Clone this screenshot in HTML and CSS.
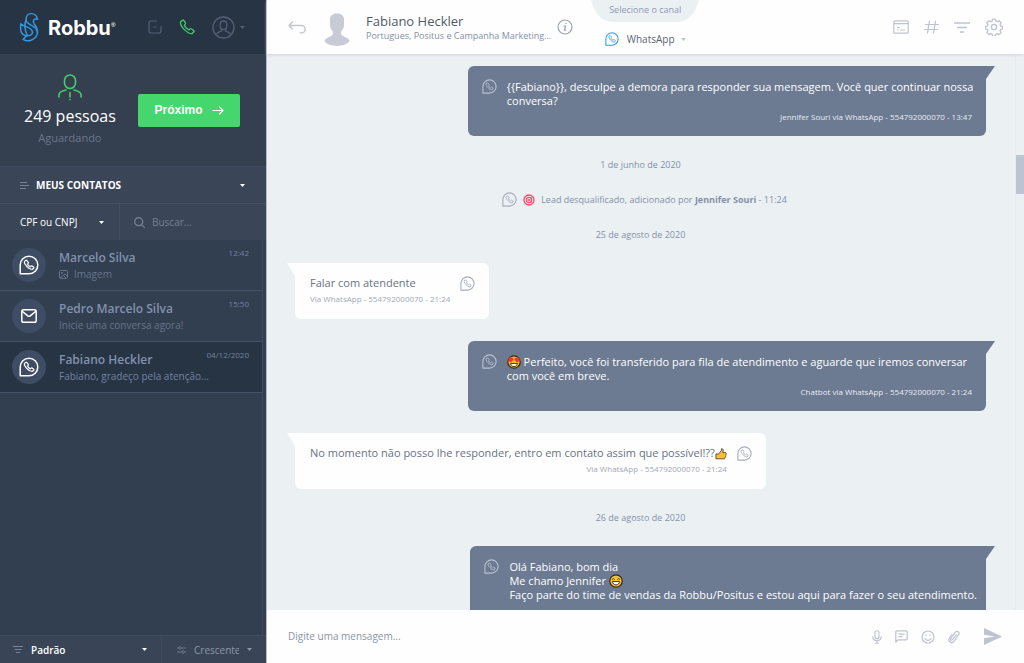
FILE: index.html
```html
<!DOCTYPE html>
<html lang="pt-BR">
<head>
<meta charset="utf-8">
<meta name="viewport" content="width=device-width, initial-scale=1">
<title>Robbu</title>
<link rel="stylesheet" href="styles.css">
</head>
<body>
<svg class="sprite" aria-hidden="true">
  <symbol id="whats" viewBox="0 0 20 20">
    <path d="M1.2 18.8V10A8.8 8.8 0 1 1 10 18.8Z" fill="none" stroke="currentColor" stroke-width="1.5" stroke-linejoin="round"/>
    <path d="M6.7 5.3 5.4 6.6c-.4 2.500 4.600 7.900 7.700 7.900l1.600-1.300c.3-.3.3-.7 0-1l-1.500-1.100c-.3-.3-.7-.2-1 0l-.8.7c-1.200-.5-2.200-1.600-2.800-2.700l.7-.9c.2-.3.2-.6 0-.9L7.700 5.300c-.3-.3-.7-.3-1 0Z" fill="none" stroke="currentColor" stroke-width="1.200" stroke-linejoin="round"/>
  </symbol>
  <symbol id="caret" viewBox="0 0 5 3"><path d="M0 0h5L2.500 3Z" fill="currentColor"/></symbol>
</svg>
<div class="app">
  <aside class="sidebar">
    <header class="brand-bar">
      <a class="brand" href="#" aria-label="Robbu">
        <svg class="brand-mark" viewBox="58 36 60 92" fill="none" stroke="#3199e6" stroke-width="4.500" stroke-linecap="round" stroke-linejoin="round">
          <path d="M114 58C110 36 79 34 79 60c0 18 35 16 35 38 0 14-12 22-24 26-6 1-14 0-20-4l10-11"/>
          <path d="M114 58c-10-2-16 3-11 13 8 9 11 17 11 27"/>
          <path d="M63 72c-3 24 2 36 20 37 14 0 18-8 14-17-6-11-24-9-34-20Z"/>
          <path d="M79 60c-6 12-6 26 4 49"/>
        </svg>
        <span class="brand-name">Robbu</span><span class="brand-reg">®</span>
      </a>
      <nav class="brand-tools" aria-label="Conta">
        <button type="button" class="icon-button" aria-label="Pausa">
          <svg width="14" height="14" viewBox="0 0 14 14" fill="none" stroke="#565e76" stroke-width="1.200" stroke-linecap="round"><path d="M8.500 1H3a2 2 0 0 0-2 2v8a2 2 0 0 0 2 2h8a2 2 0 0 0 2-2V6.500M6 7h2"/></svg>
        </button>
        <button type="button" class="icon-button" aria-label="Telefone">
          <svg width="16" height="16" viewBox="0 0 16 16" fill="none" stroke="#45cd6b" stroke-width="1.300" stroke-linejoin="round"><path d="M3.500 1.200 1.500 3C.8 7.500 8.800 15 13 14.700l1.800-1.900c.4-.5.3-1-.1-1.300l-2.500-1.700c-.5-.3-.9-.2-1.200.1l-1.100 1.100C8 10 6 8 5.300 6.300l1-1.200c.3-.4.3-.8.1-1.200L4.700 1.400c-.3-.4-.8-.5-1.200-.2Z"/></svg>
        </button>
        <button type="button" class="icon-button account" aria-label="Perfil">
          <svg width="23" height="23" viewBox="0 0 23 23" fill="none" stroke="#565e76" stroke-width="1.300"><circle cx="11.500" cy="11.500" r="10.500"/><rect x="8.200" y="5" width="6.600" height="8.500" rx="3.300"/><path d="M4.500 18.500c.8-2.500 2.800-2.700 5-3.500v-2m4 0v2c2.200.8 4.200 1 5 3.500"/></svg>
          <svg class="caret dim" aria-hidden="true"><use href="#caret"/></svg>
        </button>
      </nav>
    </header>

    <section class="queue">
      <div class="queue-count">
        <svg width="24" height="27" viewBox="0 0 24 27" fill="none" stroke="#45cd6b" stroke-width="1.600" stroke-linecap="round"><rect x="6.500" y="1" width="11" height="13.500" rx="5.500"/><path d="M1 23v-2c0-3 2-4 7-5M23 23v-2c0-3-2-4-7-5M12 18.500v4.500M12 25.500v.2"/></svg>
        <strong class="queue-number">249 pessoas</strong>
        <span class="queue-label">Aguardando</span>
      </div>
      <button type="button" class="next-button">Próximo
        <svg width="12" height="9" viewBox="0 0 12 9" fill="none" stroke="#fff" stroke-width="1.200" stroke-linecap="round" stroke-linejoin="round"><path d="M1 4.500h10M7.500 1 11 4.500 7.500 8"/></svg>
      </button>
    </section>

    <button type="button" class="list-title">
      <svg width="9" height="7" viewBox="0 0 9 7" stroke="#77839a" stroke-width="1"><path d="M0 .5h7M0 3.500h9M0 6.500h6"/></svg>
      <span>MEUS CONTATOS</span>
      <svg class="caret" aria-hidden="true"><use href="#caret"/></svg>
    </button>

    <div class="filters">
      <label class="select-box">
        <select aria-label="Campo de busca"><option>CPF ou CNPJ</option></select>
        <svg class="caret" aria-hidden="true"><use href="#caret"/></svg>
      </label>
      <label class="search">
        <svg width="11" height="11" viewBox="0 0 11 11" fill="none" stroke="#77839a" stroke-width="1.200" stroke-linecap="round"><circle cx="4.700" cy="4.700" r="4"/><path d="m7.600 7.600 2.800 2.800"/></svg>
        <input type="search" placeholder="Buscar..." aria-label="Buscar">
      </label>
    </div>

    <ul class="contacts">
      <li><a class="contact" href="#">
        <span class="avatar"><svg width="20" height="20"><use href="#whats"/></svg></span>
        <span class="contact-text"><span class="contact-name">Marcelo Silva</span>
          <span class="contact-preview"><svg width="9" height="9" viewBox="0 0 9 9" fill="none" stroke="currentColor"><rect x=".5" y=".5" width="8" height="8" rx="1"/><circle cx="3" cy="3" r=".7"/><path d="m1 8 5-4 2 2M5 6l2 2"/></svg>Imagem</span></span>
        <time class="contact-time">12:42</time>
      </a></li>
      <li><a class="contact" href="#">
        <span class="avatar"><svg width="16" height="14" viewBox="0 0 16 14" fill="none" stroke="currentColor" stroke-width="1.500" stroke-linejoin="round" stroke-linecap="round"><rect x=".8" y=".8" width="14.400" height="12.400" rx="1.800"/><path d="m1.500 2.500 5.300 4.300c.8.600 1.600.6 2.400 0l5.300-4.300"/></svg></span>
        <span class="contact-text"><span class="contact-name">Pedro Marcelo Silva</span>
          <span class="contact-preview">Inicie uma conversa agora!</span></span>
        <time class="contact-time">15:50</time>
      </a></li>
      <li><a class="contact active" href="#" aria-current="true">
        <span class="avatar"><svg width="20" height="20"><use href="#whats"/></svg></span>
        <span class="contact-text"><span class="contact-name">Fabiano Heckler</span>
          <span class="contact-preview">Fabiano, gradeço pela atenção...</span></span>
        <time class="contact-time">04/12/2020</time>
      </a></li>
    </ul>

    <footer class="sort-bar">
      <label class="select-box sort-view">
        <svg width="10" height="7" viewBox="0 0 10 7" stroke="#77839a"><path d="M0 .5h10M1.500 3.500h7M3 6.500h4"/></svg>
        <select aria-label="Visualização"><option>Padrão</option></select>
        <svg class="caret" aria-hidden="true"><use href="#caret"/></svg>
      </label>
      <label class="select-box sort-order">
        <svg width="9" height="8" viewBox="0 0 9 8" fill="none" stroke="#66788b"><path d="M0 2h1.500M4.500 2H9M0 6h4.500M7.500 6H9"/><circle cx="3" cy="2" r="1.300"/><circle cx="6" cy="6" r="1.300"/></svg>
        <select aria-label="Ordem"><option>Crescente</option></select>
        <svg class="caret" aria-hidden="true"><use href="#caret"/></svg>
      </label>
    </footer>
  </aside>

  <main class="chat">
    <header class="chat-header">
      <button type="button" class="icon-button" aria-label="Voltar">
        <svg width="18" height="13" viewBox="0 0 18 13" fill="none" stroke="#c3c7d2" stroke-width="1.400" stroke-linecap="round" stroke-linejoin="round"><path d="M4.500 1 1 4.500 4.500 8M1 4.500h12.500a3.700 3.700 0 0 1 0 7.400H12"/></svg>
      </button>
      <svg class="person" viewBox="0 0 26 33" aria-hidden="true"><path d="M6 6c0-7.500 14-7.500 14 0 0 2 .5 8-1 10-1.200 1.600-2 2.500-2 4.500 0 3 7.500 3.500 8.700 7.500C21 34.500 5 34.500.3 28 1.500 24 9 23.500 9 20.500c0-2-.8-2.900-2-4.500C5.500 14 6 8 6 6Z" fill="#c6cbd5"/></svg>
      <div class="customer">
        <h1 class="customer-name">Fabiano Heckler</h1>
        <p class="customer-tags">Portugues, Positus e Campanha Marketing...</p>
      </div>
      <button type="button" class="icon-button info" aria-label="Informações">
        <svg width="16" height="16" viewBox="0 0 16 16" fill="none" stroke="#9ba2b1" stroke-width="1.200" stroke-linecap="round"><circle cx="8" cy="8" r="7"/><path d="M8.900 4.200v.3M7 7h1.500l-1 4.200h1.300"/></svg>
      </button>
      <div class="channel">
        <svg class="channel-tab-shape" viewBox="0 0 108 22" preserveAspectRatio="none" aria-hidden="true"><path d="M0 0h108c-4 14-10 22-24 22H24C10 22 4 14 0 0Z" fill="#ebf0f3"/></svg>
        <span class="channel-tab">Selecione o canal</span>
        <label class="channel-choice">
          <svg width="14" height="14" class="blue"><use href="#whats"/></svg>
          <select aria-label="Canal"><option>WhatsApp</option></select>
          <svg class="caret" aria-hidden="true"><use href="#caret"/></svg>
        </label>
      </div>
      <nav class="chat-tools" aria-label="Ferramentas">
        <button type="button" class="icon-button" aria-label="Roteiro"><svg width="16" height="14" viewBox="0 0 16 14" fill="none" stroke="#bfc3d0" stroke-width="1.200"><rect x=".8" y=".8" width="14.400" height="12.400" rx="1"/><path d="M1 3.700h14M4 7.500h3M4 10h1.500M7 10h5"/></svg></button>
        <button type="button" class="icon-button" aria-label="Etiquetas"><svg width="15" height="14" viewBox="0 0 15 14" fill="none" stroke="#bfc3d0" stroke-width="1.200" stroke-linecap="round"><path d="M5.500 1 3.500 13M11.500 1l-2 12M1.500 4.500h13M.7 9.500h13"/></svg></button>
        <button type="button" class="icon-button" aria-label="Filtrar"><svg width="16" height="11" viewBox="0 0 16 11" fill="none" stroke="#bfc3d0" stroke-width="1.500"><path d="M0 1h16M3 5.500h10M6 10h4"/></svg></button>
        <button type="button" class="icon-button" aria-label="Configurações"><svg width="18" height="18" viewBox="0 0 18 18" fill="none" stroke="#bfc3d0" stroke-width="1.300" stroke-linejoin="round"><circle cx="9" cy="9" r="2.600"/><path d="M7.600 1.200h2.800l.6 2 1.300.5 1.800-1 2 2-1 1.900.5 1.200 2 .6v2.500l-2 .6-.5 1.300 1 1.800-2 2-1.800-1-1.300.5-.6 2H7.600l-.6-2-1.300-.5-1.800 1-2-2 1-1.800-.5-1.300-1.900-.6V8.400l1.900-.6.5-1.200-1-1.900 2-2 1.800 1L7 3.200Z"/></svg></button>
      </nav>
    </header>

    <section class="messages" aria-label="Mensagens">
      <div class="thread">
        <article class="bubble sent">
          <svg class="via"><use href="#whats"/></svg>
          <div class="bubble-body"><p>{{Fabiano}}, desculpe a demora para responder sua mensagem. Você quer continuar nossa conversa?</p><footer>Jennifer Souri via WhatsApp - 554792000070 - 13:47</footer></div>
        </article>
        <div class="day">1 de junho de 2020</div>
        <div class="event">
          <svg class="via"><use href="#whats"/></svg>
          <svg width="12" height="12" viewBox="0 0 12 12" fill="none" stroke="#fb4460" stroke-width="1.300"><circle cx="6" cy="6" r="5"/><circle cx="6" cy="6" r="2.600"/><circle cx="6" cy="6" r=".4"/></svg>
          <span>Lead desqualificado, adicionado por <b>Jennifer Souri</b> - 11:24</span>
        </div>
        <div class="day">25 de agosto de 2020</div>
        <article class="bubble received">
          <div class="bubble-body"><p>Falar com atendente</p><footer>Via WhatsApp - 554792000070 - 21:24</footer></div>
          <svg class="via"><use href="#whats"/></svg>
        </article>
        <article class="bubble sent">
          <svg class="via"><use href="#whats"/></svg>
          <div class="bubble-body"><p><svg class="emoji" viewBox="0 0 14 14" role="img" aria-label="Apaixonado"><circle cx="7" cy="7" r="6.200" fill="#fdb92d" stroke="#33251f" stroke-width="1.200"/><path d="M1.500 3.500C3 1.500 4.500 2.500 4.500 3c1.500-.8 2.500.5 1.800 2L4 7.500 1.500 6ZM12.500 3.500C11 1.500 9.500 2.500 9.500 3 8 2.200 7 3.500 7.700 5L10 7.500 12.500 6Z" fill="#ef3b24"/><path d="M3.500 8.500h7c-.5 4-6.500 4-7 0Z" fill="#fff" stroke="#33251f" stroke-width=".9"/></svg> Perfeito, você foi transferido para fila de atendimento e aguarde que iremos conversar com você em breve.</p><footer>Chatbot via WhatsApp - 554792000070 - 21:24</footer></div>
        </article>
        <article class="bubble received">
          <div class="bubble-body"><p>No momento não posso lhe responder, entro em contato assim que possível!??<svg class="emoji thumb-up" viewBox="0 0 13 13" role="img" aria-label="Joinha"><path d="M1 6.500h3L6.700 3l.5-2.200c1.800-.2 2.200 1.500 1.200 4.200h3c1 .3 1 1.500.4 1.800.5.700.3 1.400-.3 1.700.3.700 0 1.300-.5 1.600.2.800-.3 1.600-1.200 1.600H1Z" fill="#fdbd35" stroke="#4a3b2a" stroke-width=".9" stroke-linejoin="round"/></svg></p><footer>Via WhatsApp - 554792000070 - 21:24</footer></div>
          <svg class="via"><use href="#whats"/></svg>
        </article>
        <div class="day">26 de agosto de 2020</div>
        <article class="bubble sent">
          <svg class="via"><use href="#whats"/></svg>
          <div class="bubble-body"><p>Olá Fabiano, bom dia<br>Me chamo Jennifer <svg class="emoji" viewBox="0 0 14 14" role="img" aria-label="Sorriso"><circle cx="7" cy="7" r="6.200" fill="#fdc037" stroke="#33251f" stroke-width="1.200"/><path d="M3 5.500q1.300-1.600 2.600 0M8.400 5.500q1.300-1.600 2.600 0" fill="none" stroke="#33251f" stroke-width=".9"/><path d="M3.500 7.500h7c-.3 4.500-6.700 4.500-7 0Z" fill="#fff" stroke="#33251f" stroke-width=".9"/></svg><br>Faço parte do time de vendas da Robbu/Positus e estou aqui para fazer o seu atendimento.</p></div>
        </article>
      </div>
      <div class="scroll-track"><span class="scroll-thumb"></span></div>
    </section>

    <form class="composer">
      <input type="text" placeholder="Digite uma mensagem..." aria-label="Digite uma mensagem">
      <div class="composer-tools">
        <button type="button" class="icon-button" aria-label="Gravar áudio"><svg width="10" height="14" viewBox="0 0 10 14" fill="none" stroke="#bfc3d0" stroke-width="1.100" stroke-linecap="round"><rect x="3" y=".7" width="4" height="8" rx="2"/><path d="M.8 6.500C.8 12 9.200 12 9.200 6.500M5 10.700v2.600M3.500 13.300h3"/></svg></button>
        <button type="button" class="icon-button" aria-label="Frases rápidas"><svg width="13" height="13" viewBox="0 0 13 13" fill="none" stroke="#bfc3d0" stroke-width="1.200" stroke-linejoin="round"><path d="M.8 12V1.800q0-1 1-1h9.400q1 0 1 1v7q0 1-1 1H3.200ZM3.500 4.200h6M3.500 6.600h4"/></svg></button>
        <button type="button" class="icon-button" aria-label="Emoji"><svg width="14" height="14" viewBox="0 0 14 14" fill="none" stroke="#bfc3d0" stroke-width="1.200" stroke-linecap="round"><circle cx="7" cy="7" r="6"/><path d="M4 8.500c1.300 2.500 4.700 2.500 6 0M5 4.800v.5M9 4.800v.5"/></svg></button>
        <button type="button" class="icon-button" aria-label="Anexar"><svg width="12" height="14" viewBox="0 0 12 14" fill="none" stroke="#bfc3d0" stroke-width="1.200" stroke-linecap="round"><path d="m8.500 4.500-4 5.200c-.9 1.200-2.500 0-1.700-1.200L7.300 2.200c1.500-2 4.800.2 3.400 2.500L6 11.300c-2 2.900-6.500.3-4.700-3.100L4 4.500"/></svg></button>
        <button type="submit" class="icon-button send" aria-label="Enviar"><svg width="18" height="17" viewBox="0 0 18 17" fill="#bfc3d0"><path d="M0 0 18 8.500 0 17V10.300l11-1.800L0 6.700Z"/></svg></button>
      </div>
    </form>
  </main>
</div>
</body>
</html>
```
FILE: styles.css
```css
* { box-sizing: border-box; }

body {
  margin: 0;
  font-family: "Open Sans", "Noto Sans", sans-serif;
  font-size: 11px;
  color: #5b6578;
}

p, h1, ul { margin: 0; padding: 0; }
ul { list-style: none; }
svg { flex: none; display: block; }
a { color: inherit; text-decoration: none; }
.sprite { position: absolute; width: 0; height: 0; }

button, input, select {
  font: inherit;
  color: inherit;
  border: 0;
  margin: 0;
  padding: 0;
  background: none;
  outline: 0;
}
select { appearance: none; flex: 1; min-width: 0; }
button { cursor: pointer; }
.icon-button { display: flex; align-items: center; }
.caret { width: 5px; height: 3px; color: #fff; }
.caret.dim { color: #565e76; }

.app {
  display: grid;
  grid-template-columns: 266px minmax(0, 1fr);
  height: 100vh;
  overflow: hidden;
}

/* Sidebar */
.sidebar {
  display: flex;
  flex-direction: column;
  min-height: 0;
  background: #323f50;
}

.brand-bar {
  display: flex;
  align-items: center;
  justify-content: space-between;
  height: 54px;
  padding: 0 21px 0 19px;
  background: #263444;
}
.brand { display: flex; align-items: center; color: #fff; }
.brand-mark { width: 20px; height: 30px; margin-right: 9px; }
.brand-name { font: 700 20px/30px Inter, sans-serif; padding-top: 2px; }
.brand-reg { align-self: flex-start; font-size: 6px; line-height: 28px; }
.brand-tools { display: flex; align-items: center; gap: 17px; }
.account { gap: 5px; }

.queue {
  display: flex;
  align-items: center;
  justify-content: space-between;
  height: 112px;
  padding: 0 26px 0 24px;
  background: #343f50;
}
.queue-count { display: flex; flex-direction: column; align-items: center; }
.queue-number { font-size: 16px; font-weight: 400; line-height: 24px; color: #fff; margin-top: 3px; }
.queue-label { line-height: 16px; color: #6c788b; margin-top: 2px; }
.next-button {
  display: flex;
  align-items: center;
  justify-content: center;
  gap: 9px;
  width: 102px;
  height: 33px;
  border-radius: 2px;
  background: #45d66e;
  color: #fff;
  font: 700 12px/16px "Liberation Sans", Arial, sans-serif;
}

.list-title {
  display: flex;
  align-items: center;
  gap: 7px;
  height: 37px;
  padding: 0 21px 0 20px;
  border-top: 1px solid #3b4a5e;
  background: #3a4657;
  color: #fff;
  font-size: 10px;
  font-weight: 700;
}
.list-title span { flex: 1; text-align: left; }

.filters {
  display: grid;
  grid-template-columns: 120px minmax(0, 1fr);
  height: 37px;
  border-top: 1px solid #3f5063;
  background: #3a4657;
  font-size: 10px;
}
.select-box { display: flex; align-items: center; padding: 0 15px 0 20px; color: #fff; }
.filters .select-box { border-right: 1px solid #3f5063; }
.search { display: flex; align-items: center; gap: 7px; padding-left: 14px; }
.search input { width: 100%; min-width: 0; }
.search input::placeholder { color: #758095; opacity: 1; }

.contacts { flex: 1; min-height: 0; margin-right: 3px; border-right: 1px solid #3c4b5f; }
.contact {
  display: flex;
  align-items: center;
  gap: 13px;
  padding: 8px 13px 8px 12px;
  border-bottom: 1px solid #43536a;
}
.contact.active { background: #263444; }
.avatar {
  flex: none;
  display: grid;
  place-items: center;
  width: 34px;
  height: 34px;
  border-radius: 50%;
  background: #3e4d63;
  color: #fff;
}
.contact-text { flex: 1; min-width: 0; }
.contact-name { display: block; font-size: 12px; font-weight: 600; line-height: 18px; color: #8291ad; }
.contact-preview {
  display: flex;
  align-items: center;
  gap: 6px;
  font-size: 10px;
  line-height: 14px;
  color: #66748b;
  white-space: nowrap;
}
.active .contact-preview { color: #7482a0; }
.contact-time { align-self: flex-start; margin-left: -60px; font-size: 8px; line-height: 10px; color: #7482a0; }

.sort-bar {
  display: grid;
  grid-template-columns: 162px minmax(0, 1fr);
  height: 28px;
  border-top: 1px solid #3f4d62;
  background: #394556;
  font-size: 10px;
}
.sort-bar .select-box { gap: 8px; padding: 0 14px 0 13px; }
.sort-view { font-weight: 600; border-right: 1px solid #3d4c5e; }
.sort-bar .sort-order { padding-left: 15px; }
.sort-bar .sort-order, .sort-order .caret { color: #8b97a9; }

/* Conversation */
.chat {
  display: flex;
  flex-direction: column;
  min-width: 0;
  min-height: 0;
  border-left: 1px solid #b4b8ca;
  background: #ebf0f3;
}

.chat-header {
  position: relative;
  z-index: 1;
  display: flex;
  align-items: center;
  height: 54px;
  padding: 0 21px;
  background: #fdfefd;
  box-shadow: 0 1px 3px #cdd1e0;
}
.person { width: 26px; height: 33px; margin: 4px 16px 0 18px; }
.customer-name { font-size: 13px; font-weight: 400; line-height: 18px; color: #4f596a; }
.customer-tags { font-size: 9px; line-height: 12px; color: #8391a9; white-space: nowrap; }
.info { margin-left: 6px; }
.channel {
  position: relative;
  display: flex;
  flex-direction: column;
  align-self: stretch;
  align-items: center;
  width: 108px;
  margin-left: 18px;
}
.channel-tab-shape { position: absolute; inset: 0 0 auto; width: 100%; height: 22px; }
.channel-tab { position: relative; font-size: 9px; line-height: 20px; color: #8f99b5; }
.channel-choice { display: flex; align-items: center; gap: 8px; margin-top: 11px; font-size: 10px; line-height: 16px; }
.channel-choice select { flex: none; }
.channel-choice .caret { color: #bfc3d0; margin-left: -2px; }
.blue { color: #2e9fe8; }
.chat-tools { display: flex; align-items: center; gap: 15px; margin-left: auto; }

.messages { display: flex; flex: 1; min-height: 0; overflow: hidden; }
.thread {
  display: flex;
  flex: 1;
  flex-direction: column;
  gap: 22px;
  min-width: 0;
  padding: 12px 29px 0 28px;
}
.thread > * { flex: none; }
.scroll-track { flex: none; width: 9px; padding-top: 101px; border-left: 1px solid #e5e8ed; }
.scroll-thumb { display: block; height: 39px; background: #bcc4d1; }

.bubble {
  position: relative;
  display: flex;
  gap: 10px;
  max-width: 75%;
  padding: 13px 14px 14px;
  border-radius: 6px;
}
.bubble::after { content: ""; position: absolute; top: 0; width: 15px; height: 13px; background: inherit; }
.bubble p { line-height: 14px; }
.bubble footer { margin-top: 3px; font-size: 8px; line-height: 12px; text-align: right; }
.sent { align-self: flex-end; padding-bottom: 13px; background: #6c7a92; color: #fff; }
.sent .bubble-body { padding-top: 1px; }
.sent p { margin-right: -5px; }
.sent::after { right: -9px; clip-path: polygon(0 0, 100% 0, 6px 100%, 0 100%); }
.sent .bubble-body { position: relative; z-index: 1; }
.sent footer { color: #e9ecf2; }
.received { align-self: flex-start; padding-left: 15px; background: #fdfefd; color: #6a7386; }
.received::after { left: -8px; clip-path: polygon(0 0, 100% 0, 100% 100%, 8px 100%); }
.received .bubble-body { position: relative; z-index: 1; }
.received footer { color: #a3a8b5; }
.via { width: 15px; height: 15px; color: #a7aebc; }
.sent .via { color: #b9c1cf; }
.emoji { display: inline-block; width: 14px; height: 14px; margin: -2px 0; vertical-align: -1px; }
.emoji.thumb-up { width: 12px; height: 12px; }

.day, .event { font-size: 9px; line-height: 13px; color: #8490a9; }
.day { text-align: center; }
.event { display: flex; align-items: center; justify-content: center; gap: 6px; height: 13px; padding-left: 8px; }

.composer {
  display: flex;
  align-items: center;
  height: 53px;
  padding: 0 22px 0 21px;
  background: #fdfefd;
}
.composer input { flex: 1; min-width: 0; font-size: 10px; line-height: 16px; padding-bottom: 2px; }
.composer input::placeholder { color: #8a94a8; opacity: 1; }
.composer-tools { display: flex; align-items: center; gap: 13px; }
.send { margin-left: 11px; }
```
